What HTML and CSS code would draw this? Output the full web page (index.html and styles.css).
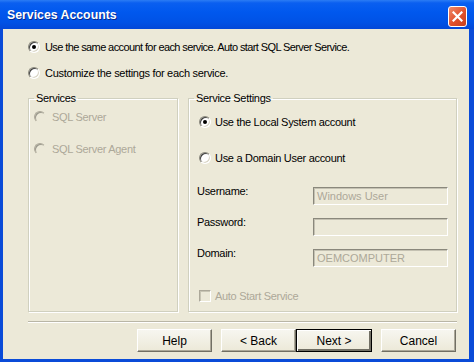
FILE: index.html
```html
<!DOCTYPE html>
<html lang="en">
<head>
  <meta charset="UTF-8" />
  <title>Services Accounts</title>
  <link rel="stylesheet" href="styles.css">
</head>
<body>
  <div class="window">
    <!-- TITLE BAR -->
    <div class="titlebar">
      <span class="title">Services Accounts</span>
      <span class="close">
        <svg width="11" height="11" viewBox="0 0 11 11">
          <path d="M1.5 1.5 L9.5 9.5 M9.5 1.5 L1.5 9.5" stroke="#fff" stroke-width="2.2" stroke-linecap="square" />
        </svg>
      </span>
    </div>

    <div class="client">
      <!-- MODE -->
      <div class="choices">
        <div class="opt tight"><span class="radio on"></span>Use the same account for each service. Auto start SQL Server Service.</div>
        <div class="opt"><span class="radio"></span>Customize the settings for each service.</div>
      </div>

      <!-- GROUPS -->
      <div class="groups">
        <fieldset class="group services">
          <legend>Services</legend>
          <div class="inner">
            <div class="opt off"><span class="radio"></span>SQL Server</div>
            <div class="opt off"><span class="radio"></span>SQL Server Agent</div>
          </div>
        </fieldset>

        <fieldset class="group settings">
          <legend>Service Settings</legend>
          <div class="inner">
            <div class="opt first"><span class="radio on"></span>Use the Local System account</div>
            <div class="opt second"><span class="radio"></span>Use a Domain User account</div>
            <div class="field"><span>Username:</span><span class="input">Windows User</span></div>
            <div class="field"><span>Password:</span><span class="input"></span></div>
            <div class="field"><span>Domain:</span><span class="input">OEMCOMPUTER</span></div>
            <div class="opt off check-row"><span class="check"></span>Auto Start Service</div>
          </div>
        </fieldset>
      </div>

      <div class="sep"></div>

      <!-- BUTTONS -->
      <div class="buttons">
        <button class="btn">Help</button>
        <div class="pair">
          <button class="btn">&lt; Back</button>
          <button class="btn default">Next &gt;</button>
        </div>
        <button class="btn">Cancel</button>
      </div>
    </div>
  </div>
</body>
</html>
```

FILE: styles.css
```css
:root {
  --face: #ece9d8;
  --dim: #aca899;
  --frame: #0a4bd8;
}
* {
  box-sizing: border-box;
}
body {
  margin: 0;
  font-family: "Liberation Sans", Arial, sans-serif;
  font-size: 11px;
  letter-spacing: -0.3px;
  color: #000;
}
.window {
  width: 474px;
  height: 362px;
  display: flex;
  flex-direction: column;
  background: var(--frame);
}

/* TITLE BAR */
.titlebar {
  height: 29px;
  flex: none;
  display: flex;
  align-items: center;
  justify-content: space-between;
  padding: 0 7px 0 7px;
  background: linear-gradient(#2b7cf4 0, #0a5ff0 3px, #0058ee 12px, #0052e6 22px, #0348d8 29px);
}
.title {
  color: #fff;
  font-weight: 700;
  font-size: 12.3px;
  letter-spacing: 0;
  text-shadow: 1px 1px #0a2a8a;
  padding-top: 1px;
}
.close {
  width: 19px;
  height: 21px;
  margin-top: 3px;
  display: flex;
  align-items: center;
  justify-content: center;
  border: 1px solid #fff;
  border-radius: 3px;
  background: linear-gradient(135deg, #f08a6a, #e0502c 55%, #c8401e);
}

/* CLIENT */
.client {
  flex: 1;
  margin: 0 5px 4px 3px;
  background: var(--face);
  padding: 11px 12px 7px 25px;
  display: flex;
  flex-direction: column;
}
.choices {
  display: flex;
  flex-direction: column;
  gap: 12px;
}
.opt {
  height: 14px;
  display: flex;
  align-items: center;
  gap: 5px;
  white-space: nowrap;
}
.opt.tight {
  letter-spacing: -0.6px;
}
.opt.off {
  color: var(--dim);
}

/* RADIO / CHECK */
.radio {
  position: relative;
  width: 12px;
  height: 12px;
  flex: none;
  border-radius: 50%;
  background: #fff;
  border: 1px solid;
  border-color: #8a887c #fff #fff #8a887c;
  box-shadow: inset 1px 1px #404040, inset -1px -1px #d8d4c4;
}
.radio.on::after {
  content: "";
  position: absolute;
  left: 3px;
  top: 3px;
  width: 4px;
  height: 4px;
  border-radius: 50%;
  background: #000;
}
.off .radio {
  background: var(--face);
  box-shadow: inset 1px 1px #9a988c;
  border-color: #aca899 var(--face) var(--face) #aca899;
}
.check {
  width: 12px;
  height: 12px;
  flex: none;
  background: var(--face);
  border: 1px solid;
  border-color: #aca899 #fff #fff #aca899;
  box-shadow: inset 1px 1px #c8c5b4;
}

/* GROUPS */
.groups {
  margin-top: 12px;
  display: flex;
  gap: 10px;
  height: 220px;
}
.group {
  margin: 0;
  padding: 0;
  min-width: 0;
  border: 1px solid #d0d0bf;
  box-shadow: inset 1px 1px #fff, 1px 1px #fff;
}
.group legend {
  margin-left: 5px;
  padding: 0 2px;
  line-height: 13px;
  color: #000;
}
.services {
  width: 150px;
}
.settings {
  flex: 1;
}
.services .inner {
  padding: 5px 0 0 5px;
  display: flex;
  flex-direction: column;
  gap: 18px;
}
.services .opt {
  gap: 6px;
}
.settings .inner {
  padding: 10px 8px 0 8px;
  display: flex;
  flex-direction: column;
}
.settings .opt {
  margin-left: 2px;
  gap: 4px;
}
.settings .second {
  margin-top: 22px;
}
.field {
  height: 18px;
  margin-top: 13px;
  display: flex;
  align-items: flex-start;
  justify-content: space-between;
  padding-top: 1px;
}
.settings .second + .field {
  margin-top: 22px;
}
.field span:first-child {
  margin-top: -3px;
}
.input {
  width: 135px;
  height: 18px;
  margin-top: -1px;
  padding: 2px 3px;
  color: var(--dim);
  background: var(--face);
  border: 1px solid;
  border-color: #8a887c #fff #fff #8a887c;
  box-shadow: inset 1px 1px #c4c1b2;
  letter-spacing: 0;
}
.check-row {
  margin-top: 22px;
  margin-left: 1px;
}

/* SEPARATOR */
.sep {
  margin-top: 9px;
  height: 2px;
  border-top: 1px solid #b9b6a6;
  border-bottom: 1px solid #fff;
}

/* BUTTONS */
.buttons {
  margin-top: 6px;
  display: flex;
  justify-content: flex-end;
  gap: 9px;
  padding-right: 1px;
}
.pair {
  display: flex;
}
.btn {
  width: 75px;
  height: 23px;
  font: inherit;
  letter-spacing: 0;
  font-size: 12px;
  color: #000;
  background: linear-gradient(#f7f6f0, #ece9d8);
  border: 1px solid;
  border-color: #fff #716f64 #716f64 #fff;
  box-shadow: inset -1px -1px #aca899;
  padding: 0;
}
.btn.default {
  width: 76px;
  border: 1px solid #000;
  box-shadow: inset 1px 1px #fff, inset -2px -2px #716f64;
}
```
